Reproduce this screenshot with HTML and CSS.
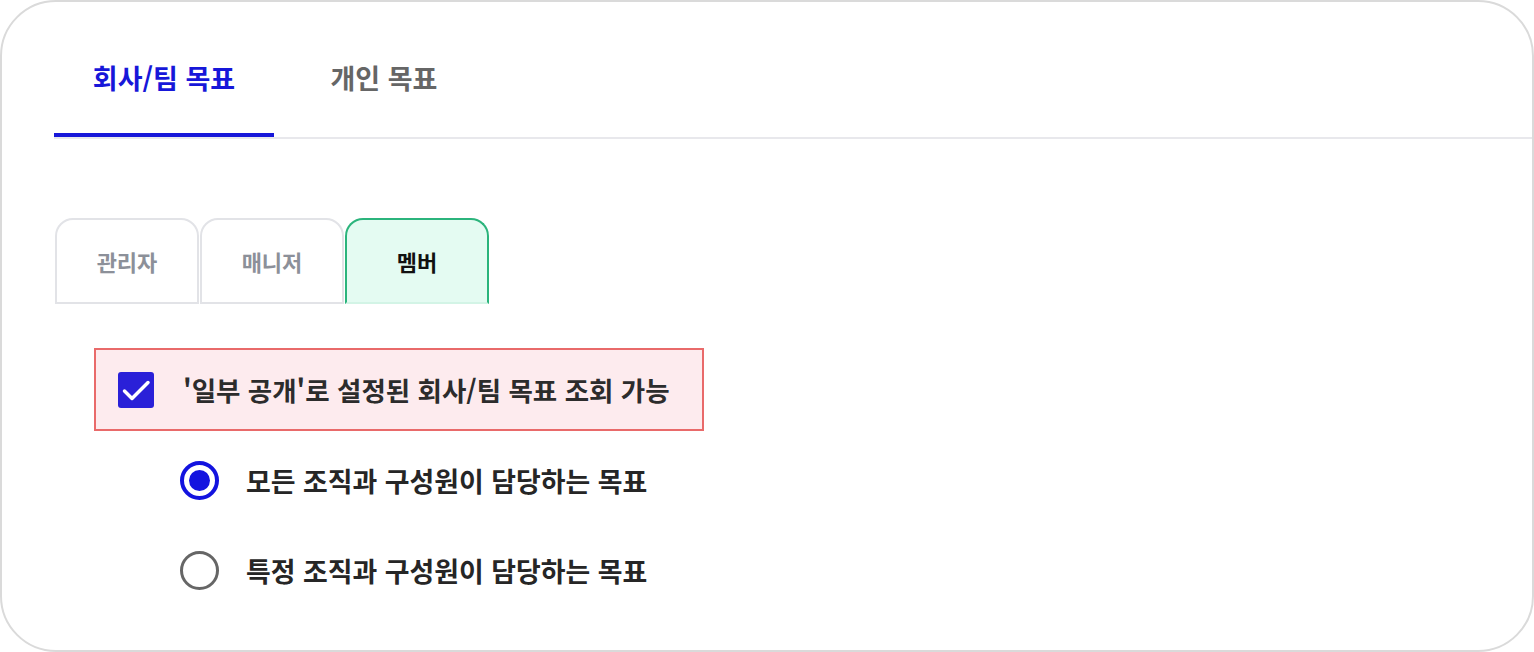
FILE: index.html
```html
<!DOCTYPE html>
<html lang="ko">
<head>
<meta charset="utf-8">
<link rel="stylesheet" href="styles.css">
</head>
<body>
<div class="card">
  <div class="top-tabs">
    <div class="top-tab active">회사/팀 목표</div>
    <div class="top-tab">개인 목표</div>
  </div>
  <div class="role-tabs">
    <div class="role-tab">관리자</div>
    <div class="role-tab">매니저</div>
    <div class="role-tab active">멤버</div>
  </div>
  <div class="check-row">
    <span class="checkbox">
      <svg width="36" height="36" viewBox="0 0 36 36"><path d="M6.5 19 L14 26.5 L30 10.5" fill="none" stroke="#fff" stroke-width="3.5" stroke-linecap="round" stroke-linejoin="round"/></svg>
    </span>
    <span class="check-label">'일부 공개'로 설정된 회사/팀 목표 조회 가능</span>
  </div>
  <div class="radio-list">
    <div class="radio-row">
      <span class="radio checked"><span class="dot"></span></span>
      <span class="radio-label">모든 조직과 구성원이 담당하는 목표</span>
    </div>
    <div class="radio-row">
      <span class="radio"></span>
      <span class="radio-label">특정 조직과 구성원이 담당하는 목표</span>
    </div>
  </div>
</div>
</body>
</html>
```
FILE: styles.css
```css
* { box-sizing: border-box; }
html, body { margin: 0; padding: 0; background: #fff; }
body {
  font-family: "Noto Sans CJK KR", "Noto Sans", sans-serif;
  font-weight: 700;
  width: 1534px;
  height: 652px;
  overflow: hidden;
}
.card {
  width: 1534px;
  height: 652px;
  border: 2px solid #dadada;
  border-radius: 56px;
  padding-left: 52px;
  background: #fff;
}
.top-tabs {
  display: flex;
  border-bottom: 2px solid #e8e8ec;
}
.top-tab {
  width: 220px;
  text-align: center;
  font-size: 27px;
  line-height: 36px;
  padding-top: 58px;
  padding-bottom: 37px;
  border-bottom: 4px solid transparent;
  color: #666;
}
.top-tab.active {
  color: #1717d9;
  border-bottom-color: #1717d9;
}
.role-tabs {
  display: flex;
  gap: 1px;
  margin-top: 79px;
  padding-left: 1px;
}
.role-tab {
  width: 144px;
  height: 86px;
  border: 2px solid #e2e3e7;
  border-radius: 18px 18px 0 0;
  display: flex;
  align-items: center;
  justify-content: center;
  font-size: 22px;
  color: #8c9099;
}
.role-tab.active {
  border-color: #2bb47c;
  border-bottom-color: #d3f4e6;
  background: #e4fbf2;
  color: #111;
}
.check-row {
  margin-top: 44px;
  margin-left: 40px;
  width: 610px;
  height: 83px;
  border: 2px solid #e96a6a;
  background: #fdebee;
  display: flex;
  align-items: center;
  padding-left: 22px;
  gap: 29px;
}
.checkbox {
  width: 36px;
  height: 36px;
  border-radius: 3px;
  background: #2a20d8;
  display: flex;
}
.check-label {
  font-size: 26.5px;
  color: #2c2c2c;
}
.radio-list {
  margin-left: 126px;
  margin-top: 30px;
  display: flex;
  flex-direction: column;
  gap: 52px;
}
.radio-row {
  display: flex;
  align-items: center;
  gap: 27px;
  height: 38px;
}
.radio {
  width: 39px;
  height: 39px;
  border-radius: 50%;
  border: 3.5px solid #666;
  display: flex;
  align-items: center;
  justify-content: center;
}
.radio.checked {
  border: 4px solid #1313df;
}
.dot {
  width: 21px;
  height: 21px;
  border-radius: 50%;
  background: #1313df;
}
.radio-label {
  font-size: 26.9px;
  color: #262626;
}
```
